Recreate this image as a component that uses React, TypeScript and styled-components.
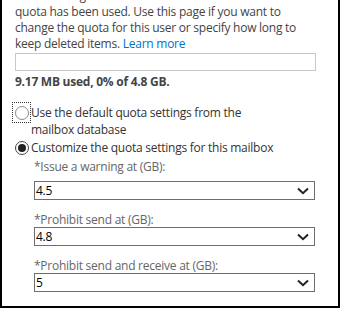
import React from "react";
import styled, { createGlobalStyle } from "styled-components";

const GlobalStyle = createGlobalStyle`
  html, body { margin: 0; padding: 0; background: #fff; }
  * { box-sizing: border-box; }
`;

const Frame = styled.div`
  width: 340px;
  height: 308px;
  border: 2px solid #000;
  border-top: none;
  overflow: hidden;
  background: #fff;
  font-family: "Open Sans", "Segoe UI", sans-serif;
  font-size: 12px;
  letter-spacing: -0.25px;
  color: #444;
`;

const Scroll = styled.div`
  margin-top: -12px;
  padding-left: 13px;
  display: flex;
  flex-direction: column;
`;

const Description = styled.div`
  line-height: 16px;
  color: #444;
`;

const Line = styled.div`
  white-space: nowrap;
`;

const Link = styled.a`
  color: #0072c6;
  text-decoration: none;
`;

const UsageBar = styled.div`
  width: 301px;
  height: 18px;
  margin-top: 1px;
  border: 1px solid #c8c8c8;
  background: #fff;
`;

const UsageText = styled.div`
  margin-top: 3px;
  line-height: 16px;
  font-weight: 700;
  color: #444;
`;

const RadioRow = styled.div<{ $first?: boolean }>`
  display: flex;
  align-items: flex-start;
  margin-left: -3px;
  margin-top: ${(p) => (p.$first ? "12px" : "-1px")};
`;

const FocusBox = styled.div<{ $focused?: boolean }>`
  width: 19px;
  height: 21px;
  flex: none;
  display: flex;
  align-items: center;
  justify-content: center;
  border: 1px dotted ${(p) => (p.$focused ? "#333" : "transparent")};
`;

const Circle = styled.span<{ $checked?: boolean }>`
  width: 14px;
  height: 14px;
  border-radius: 50%;
  border: 1px solid ${(p) => (p.$checked ? "#444" : "#8a8a8a")};
  display: flex;
  align-items: center;
  justify-content: center;
  &::after {
    content: "";
    display: ${(p) => (p.$checked ? "block" : "none")};
    width: 8px;
    height: 8px;
    border-radius: 50%;
    background: #222;
  }
`;

const RadioText = styled.div`
  padding-top: 2px;
  line-height: 17px;
  color: #333;
  white-space: nowrap;
`;

const Fields = styled.div`
  margin-left: 19px;
  margin-top: 2px;
  display: flex;
  flex-direction: column;
  gap: 13px;
`;

const Field = styled.div`
  display: flex;
  flex-direction: column;
`;

const FieldLabel = styled.div<{ $spaced?: boolean }>`
  line-height: 14px;
  margin-bottom: ${(p) => (p.$spaced ? "7px" : "0")};
  color: #666;
  white-space: nowrap;
`;

const SelectBox = styled.div`
  width: 281px;
  height: 19px;
  border: 1px solid #6d6d6d;
  display: flex;
  align-items: center;
  justify-content: space-between;
  padding: 0 5px 0 1px;
  color: #000;
  line-height: 17px;
`;

const Chevron = () => (
  <svg width="12" height="8" viewBox="0 0 12 8" aria-hidden="true">
    <path d="M1 1.5 L6 6.2 L11 1.5" fill="none" stroke="#222" strokeWidth="2" />
  </svg>
);

const Select = ({ value }: { value: string }) => (
  <SelectBox>
    <span>{value}</span>
    <Chevron />
  </SelectBox>
);

export default function App() {
  return (
    <>
      <GlobalStyle />
      <Frame>
        <Scroll>
          <Description>
            <Line>Mailbox usage shows how much of the total mailbox</Line>
            <Line>quota has been used. Use this page if you want to</Line>
            <Line>change the quota for this user or specify how long to</Line>
            <Line>
              keep deleted items. <Link href="#">Learn more</Link>
            </Line>
          </Description>
          <UsageBar />
          <UsageText>9.17 MB used, 0% of 4.8 GB.</UsageText>
          <RadioRow $first>
            <FocusBox $focused>
              <Circle />
            </FocusBox>
            <RadioText>
              Use the default quota settings from the
              <br />
              mailbox database
            </RadioText>
          </RadioRow>
          <RadioRow>
            <FocusBox>
              <Circle $checked />
            </FocusBox>
            <RadioText>Customize the quota settings for this mailbox</RadioText>
          </RadioRow>
          <Fields>
            <Field>
              <FieldLabel $spaced>*Issue a warning at (GB):</FieldLabel>
              <Select value="4.5" />
            </Field>
            <Field>
              <FieldLabel>*Prohibit send at (GB):</FieldLabel>
              <Select value="4.8" />
            </Field>
            <Field>
              <FieldLabel>*Prohibit send and receive at (GB):</FieldLabel>
              <Select value="5" />
            </Field>
          </Fields>
        </Scroll>
      </Frame>
    </>
  );
}
